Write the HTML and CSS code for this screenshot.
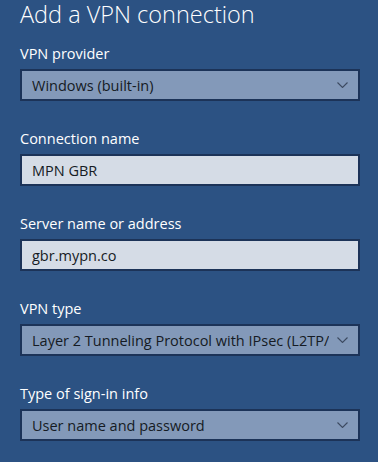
FILE: index.html
```html
<!DOCTYPE html>
<html lang="en">
<head>
    <meta charset="UTF-8">
    <title>Add a VPN connection</title>
    <link rel="stylesheet" href="styles.css">
</head>
<body>
    <div class="panel">
        <h1 class="title">Add a VPN connection</h1>

        <div class="field">
            <div class="label">VPN provider</div>
            <div class="select">
                <span class="value">Windows (built-in)</span>
                <svg class="chevron" width="11" height="6" viewBox="0 0 11 6"><path d="M0.5 0.5 L5.5 5.5 L10.5 0.5" fill="none" stroke="#3c4a60" stroke-width="1.1"/></svg>
            </div>
        </div>

        <div class="field">
            <div class="label">Connection name</div>
            <div class="input"><span class="value">MPN GBR</span></div>
        </div>

        <div class="field">
            <div class="label">Server name or address</div>
            <div class="input"><span class="value">gbr.mypn.co</span></div>
        </div>

        <div class="field">
            <div class="label">VPN type</div>
            <div class="select">
                <span class="value">Layer 2 Tunneling Protocol with IPsec (L2TP/IPsec)</span>
                <svg class="chevron" width="11" height="6" viewBox="0 0 11 6"><path d="M0.5 0.5 L5.5 5.5 L10.5 0.5" fill="none" stroke="#3c4a60" stroke-width="1.1"/></svg>
            </div>
        </div>

        <div class="field">
            <div class="label">Type of sign-in info</div>
            <div class="select">
                <span class="value">User name and password</span>
                <svg class="chevron" width="11" height="6" viewBox="0 0 11 6"><path d="M0.5 0.5 L5.5 5.5 L10.5 0.5" fill="none" stroke="#3c4a60" stroke-width="1.1"/></svg>
            </div>
        </div>
    </div>
</body>
</html>
```

FILE: styles.css
```css
body {
    margin: 0;
    background: #2c5283;
    font-family: "Open Sans", "Noto Sans", sans-serif;
    color: white;
}

.panel {
    padding: 0 18px 0 20px;
}

.title {
    margin: 0;
    font-size: 23.5px;
    font-weight: 300;
    line-height: 28px;
    height: 44px;
}

.field {
    margin-bottom: 28px;
}

.label {
    font-size: 14.5px;
    line-height: 20px;
    margin-bottom: 5px;
}

.select,
.input {
    height: 28px;
    border: 2px solid #1c3358;
    display: flex;
    align-items: center;
    padding: 0 10px;
    color: #151b24;
    font-size: 14.5px;
}

.select {
    background: #8399b9;
}

.input {
    background: #d5dce6;
}

.value {
    flex: 1;
    white-space: nowrap;
    overflow: hidden;
}

.chevron {
    margin-left: 8px;
    flex-shrink: 0;
}
```
